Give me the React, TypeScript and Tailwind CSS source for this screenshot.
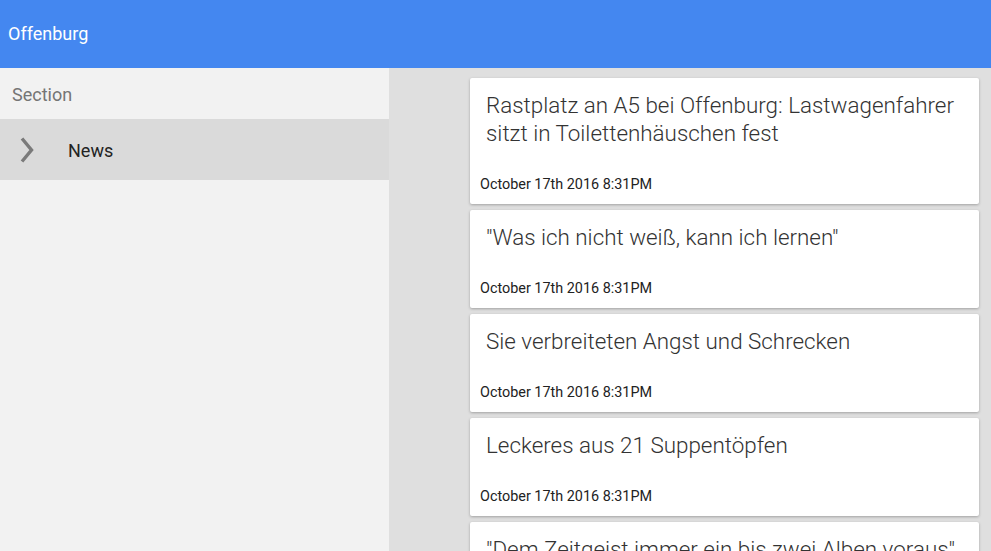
import React from "react";

const articles = [
  "Rastplatz an A5 bei Offenburg: Lastwagenfahrer sitzt in Toilettenhäuschen fest",
  "\"Was ich nicht weiß, kann ich lernen\"",
  "Sie verbreiteten Angst und Schrecken",
  "Leckeres aus 21 Suppentöpfen",
  "\"Dem Zeitgeist immer ein bis zwei Alben voraus\"",
];

export default function App() {
  return (
    <div
      className="w-[991px] h-[551px] overflow-hidden flex flex-col bg-[#dfdfdf]"
      style={{ fontFamily: "Roboto, 'Noto Sans', sans-serif" }}
    >
      <header className="h-[68px] shrink-0 bg-[#4487f0] flex items-center px-[8px]">
        <span className="text-white text-[18px] leading-none">Offenburg</span>
      </header>
      <div className="flex flex-1 min-h-0">
        <aside className="w-[389px] shrink-0 bg-[#f2f2f2] flex flex-col">
          <div className="h-[51px] flex items-center pl-[12px] pt-[2px] text-[18px] text-[#757575]">
            Section
          </div>
          <div className="h-[61px] bg-[#dadada] flex items-center">
            <svg width="14" height="26" viewBox="0 0 14 26" className="ml-[20px] mt-[1px]">
              <polyline
                points="2,1.5 11.5,13 2,24.5"
                fill="none"
                stroke="#7a7a7a"
                strokeWidth="3.4"
              />
            </svg>
            <span className="ml-[34px] mt-[2px] text-[18px] text-[#222]">News</span>
          </div>
        </aside>
        <main className="flex-1 min-w-0 pl-[81px] pr-[12px] pt-[10px] flex flex-col gap-[6px] overflow-hidden">
          {articles.map((t) => (
            <div
              key={t}
              className="shrink-0 bg-white rounded-[2px] shadow-[0_1px_3px_rgba(0,0,0,0.28)] pt-[14px] pb-[10.5px]"
            >
              <div className="pl-[16px] pr-[14px] text-[22.4px] leading-[27.5px] font-light text-[#333]">
                {t}
              </div>
              <div className="mt-[30px] pl-[10px] text-[14.4px] leading-[16px] text-[#222]">
                October 17th 2016 8:31PM
              </div>
            </div>
          ))}
        </main>
      </div>
    </div>
  );
}
